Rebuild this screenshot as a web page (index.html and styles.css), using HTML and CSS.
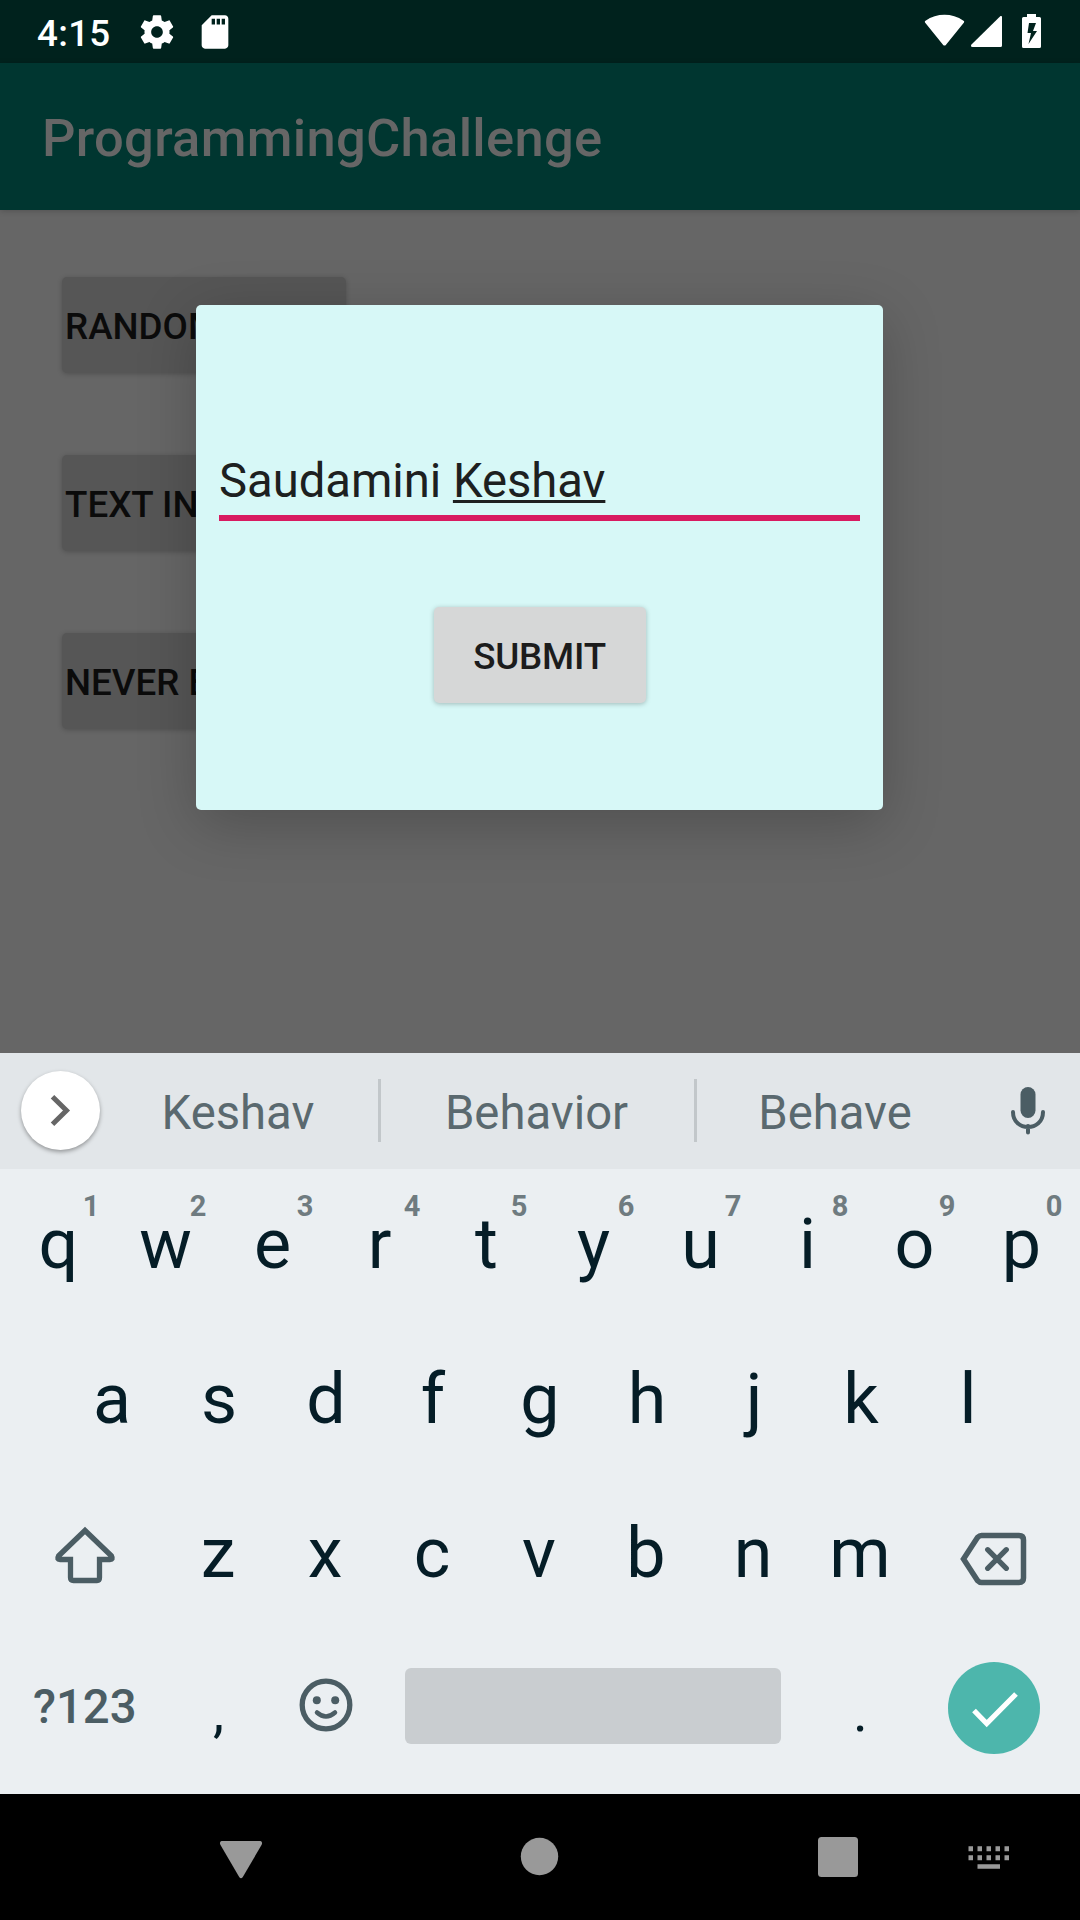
FILE: index.html
```html
<!DOCTYPE html>
<html lang="en">
<head>
<meta charset="utf-8">
<title>ProgrammingChallenge</title>
<link rel="stylesheet" href="styles.css">
</head>
<body>
<div class="phone">
  <header class="status">
    <span class="clock">4:15</span>
    <svg class="gear" width="40" height="40" viewBox="0 0 24 24"><path fill="#fff" d="M19.43 12.98c.04-.32.07-.64.07-.98s-.03-.66-.07-.98l2.11-1.65c.19-.15.24-.42.12-.64l-2-3.46c-.12-.22-.39-.3-.61-.22l-2.49 1c-.52-.4-1.08-.73-1.69-.98l-.38-2.65C14.46 2.18 14.25 2 14 2h-4c-.25 0-.46.18-.49.42l-.38 2.65c-.61.25-1.17.59-1.69.98l-2.49-1c-.23-.09-.49 0-.61.22l-2 3.46c-.13.22-.07.49.12.64l2.11 1.65c-.04.32-.07.65-.07.98s.03.66.07.98l-2.11 1.65c-.19.15-.24.42-.12.64l2 3.46c.12.22.39.3.61.22l2.49-1c.52.4 1.08.73 1.69.98l.38 2.65c.03.24.24.42.49.42h4c.25 0 .46-.18.49-.42l.38-2.65c.61-.25 1.17-.59 1.69-.98l2.49 1c.23.09.49 0 .61-.22l2-3.46c.12-.22.07-.49-.12-.64l-2.110-1.650zM12 15.500c-1.930 0-3.500-1.570-3.500-3.500s1.570-3.500 3.500-3.500 3.500 1.570 3.500 3.500-1.570 3.500-3.500 3.500z"/></svg>
    <svg class="sd" width="40" height="40" viewBox="0 0 24 24"><path fill="#fff" d="M18 2h-8L4.020 8 4 20c0 1.100.9 2 2 2h12c1.100 0 2-.9 2-2V4c0-1.100-.9-2-2-2zm-6 5.500h-2V4h2v3.500zm3 0h-2V4h2v3.500zm3 0h-2V4h2v3.500z"/></svg>
    <span class="grow"></span>
    <svg class="signals" width="120" height="36" viewBox="0 0 120 36"><g fill="#fff"><path d="M1.200 8.800Q.3 7.500 1.500 6.700C13-1.200 28-1.200 39.500 6.700Q40.700 7.500 39.800 8.800L22 30.700Q20.500 32.500 19 30.700z"/><path d="M76.500 2Q78 1.500 78 3V31.500Q78 33 76.500 33H48.500Q46 32.500 47.500 30.500z"/><path fill-rule="evenodd" d="M103 0H112V3H115.500Q117 3 117 4.500V32.500Q117 34 115.500 34H99.500Q98 34 98 32.500V4.500Q98 3 99.500 3H103zM105 9L103.500 19H107L104.500 30L113 17H109L112 9z"/></g></svg>
  </header>
  <div class="appbar">ProgrammingChallenge</div>
  <main class="content">
    <div class="choice">RANDOM</div>
    <div class="choice">TEXT IN</div>
    <div class="choice">NEVER E</div>
    <section class="dialog">
      <div class="field">Saudamini <span class="composing">Keshav</span></div>
      <div class="submit">SUBMIT</div>
    </section>
  </main>
  <section class="keyboard">
    <div class="suggestions">
      <div class="expand"><svg width="79" height="79" viewBox="0 0 79 79"><path d="M31.500 25.700L45.500 39.500 31.500 53.300" fill="none" stroke="#666" stroke-width="5"/></svg></div>
      <div class="word side">Keshav</div>
      <div class="divider"></div>
      <div class="word">Behavior</div>
      <div class="divider"></div>
      <div class="word side">Behave</div>
      <svg class="mic" width="36" height="49" viewBox="0 0 36 49"><rect x="10.500" y="1" width="15" height="31" rx="7.500" fill="#4b5d64"/><path d="M3 26C3 46 33 46 33 26M18 40V46.500" fill="none" stroke="#4b5d64" stroke-width="4" stroke-linecap="round"/></svg>
    </div>
    <div class="row upper">
      <div class="key">q<span class="hint">1</span></div><div class="key">w<span class="hint">2</span></div><div class="key">e<span class="hint">3</span></div><div class="key">r<span class="hint">4</span></div><div class="key">t<span class="hint">5</span></div><div class="key">y<span class="hint">6</span></div><div class="key">u<span class="hint">7</span></div><div class="key">i<span class="hint">8</span></div><div class="key">o<span class="hint">9</span></div><div class="key">p<span class="hint">0</span></div>
    </div>
    <div class="row upper">
      <div class="key">a</div><div class="key">s</div><div class="key">d</div><div class="key">f</div><div class="key">g</div><div class="key">h</div><div class="key">j</div><div class="key">k</div><div class="key">l</div>
    </div>
    <div class="row">
      <div class="wide"><svg width="64" height="60" viewBox="0 0 64 60"><path d="M32 5.500L58.500 31Q60.500 34.500 57 34.500H46.500V52.500Q46.500 55.500 44 55.500H20.500Q17.500 55.500 17.500 52.500V34.500H7Q3.500 34.500 5.500 31z" fill="none" stroke="#4b5d64" stroke-width="5.300"/></svg></div>
      <div class="key">z</div><div class="key">x</div><div class="key">c</div><div class="key">v</div><div class="key">b</div><div class="key">n</div><div class="key">m</div>
      <div class="wide"><svg class="back" width="68" height="56" viewBox="0 0 68 56"><path d="M4.500 28L18.500 6.500Q20.500 4.500 22.500 4.500H60Q64.500 4.500 64.500 9V47Q64.500 51.500 60 51.500H22.500Q20.500 51.500 18.500 49.500z" fill="none" stroke="#4b5d64" stroke-width="5.500"/><path d="M28.700 18.700L47.300 37.300M47.300 18.700L28.700 37.300" stroke="#4b5d64" stroke-width="5.300" stroke-linecap="round"/></svg></div>
    </div>
    <div class="row">
      <div class="wide symbols">?123</div>
      <div class="key punct">,</div>
      <div class="key"><svg class="emoji" width="54" height="54" viewBox="0 0 54 54"><g fill="none" stroke="#4b5d64"><circle cx="27" cy="27" r="23.800" stroke-width="5.300"/><path d="M18 34.500Q27 42.500 36 34.500" stroke-width="4.500" stroke-linecap="round"/></g><g fill="#4b5d64"><circle cx="17.800" cy="22.200" r="4"/><circle cx="36.200" cy="22.200" r="4"/></g></svg></div>
      <div class="space"></div>
      <div class="key punct">.</div>
      <div class="wide"><svg class="enter" width="92" height="92" viewBox="0 0 92 92"><circle cx="46" cy="46" r="46" fill="#4db6ac"/><path d="M26 48.500L38.700 61.500 68 32" fill="none" stroke="#fff" stroke-width="5.200"/></svg></div>
    </div>
  </section>
  <nav class="nav">
    <svg width="1080" height="126" viewBox="0 0 1080 126"><g fill="#999"><path d="M221.500 47H260.500Q263 48 261.500 51L242.800 83Q241 85.500 239.200 83L220.500 51Q219 48 221.500 47z"/><circle cx="539.500" cy="62.500" r="18.700"/><rect x="818" y="43" width="40" height="40" rx="3.500"/><path d="M968.500 52.200h4.500v5h-4.500zm9 0h4.500v5h-4.500zm9 0h4.500v5h-4.500zm9 0h4.500v5h-4.500zm9 0h4.500v5h-4.500zM968.500 61.200h4.500v5h-4.500zm9 0h4.500v5h-4.500zm9 0h4.500v5h-4.500zm9 0h4.500v5h-4.500zm9 0h4.500v5h-4.500zM977.500 70.200h22.500v4.600h-22.500z"/></g></svg>
  </nav>
</div>
</body>
</html>
```
FILE: styles.css
```css
body { margin: 0; font-family: Roboto, sans-serif; }
svg { display: block; flex: none; }
.phone { width: 1080px; height: 1920px; display: flex; flex-direction: column; overflow: hidden; background: #666; }
.status { height: 63px; flex: none; box-sizing: border-box; padding-left: 37px; display: flex; background: #00221d; color: #fff; }
.clock { width: 100px; font-size: 36.75px; font-weight: 500; line-height: 67px; letter-spacing: .3px; }
.gear { margin-top: 12px; }
.sd { margin: 12px 0 0 18px; }
.grow { flex: 1; }
.signals { margin: 14px 36px 0 0; }
.appbar { height: 147px; flex: none; padding-left: 42px; background: #003630; color: #666; font-size: 52.5px; font-weight: 500; line-height: 151px; letter-spacing: .3px; z-index: 1; box-shadow: 0 1px 6px rgba(0, 0, 0, .2); }
.content { height: 843px; flex: none; box-sizing: border-box; padding: 67px 62px; display: flex; flex-direction: column; gap: 82px; position: relative; overflow: hidden; background: #666; }
.choice { width: 281px; height: 96px; padding-left: 3px; background: #565656; border-radius: 5px; box-shadow: 0 1px 5px rgba(0, 0, 0, .22); color: #0b0b0b; font-size: 36.75px; font-weight: 500; line-height: 99px; white-space: nowrap; }
.dialog { position: absolute; left: 196px; top: 95px; width: 687px; height: 505px; box-sizing: border-box; padding: 140px 23px 0; border-radius: 5px; background: #d7f8f7; box-shadow: 0 14px 58px rgba(0, 0, 0, .22); display: flex; flex-direction: column; align-items: center; }
.field { width: 641px; height: 70px; border-bottom: 6px solid #d81b60; color: #1d2020; font-size: 47.25px; line-height: 73px; letter-spacing: -.05px; }
.composing { text-decoration: underline; text-decoration-thickness: 2.5px; text-underline-offset: 3px; text-decoration-skip-ink: none; }
.submit { width: 212px; height: 96px; margin-top: 86px; border-radius: 5px; background: #d6d7d7; box-shadow: 0 1px 5px rgba(0, 0, 0, .25); color: #1c1c1c; font-size: 36.75px; font-weight: 500; line-height: 99px; letter-spacing: -.2px; text-align: center; }
.keyboard { height: 741px; flex: none; background: #ebeff2; }
.suggestions { height: 116px; box-sizing: border-box; padding-left: 21px; display: flex; background: #e2e6e9; }
.expand { width: 79px; height: 79px; margin-top: 18px; border-radius: 50%; background: #fff; box-shadow: 0 2px 4px rgba(0, 0, 0, .35); }
.word { width: 313px; color: #5a696f; font-size: 47.25px; line-height: 121px; text-align: center; text-indent: -2px; }
.side { width: 278px; }
.divider { width: 3px; height: 63px; margin-top: 26px; background: #c2c7ca; }
.mic { margin: 33px 0 0 35px; }
.row { height: 154.5px; padding: 0 6px 0 4px; display: flex; justify-content: center; }
.upper { padding: 0 5px; }
.key { width: 107px; position: relative; color: #051d27; font-size: 70px; line-height: 150px; text-align: center; }
.hint { position: absolute; right: 12px; top: 20px; width: 18px; color: #6f7b80; font-size: 29px; font-weight: 700; line-height: 34px; }
.wide { width: 160.5px; display: flex; justify-content: center; align-items: flex-start; }
.wide svg { margin: 47px 0 0 1px; }
.wide .back { margin: 52.5px 0 0 -1px; }
.symbols { text-indent: 1px; color: #4b5d64; font-size: 47.25px; font-weight: 500; line-height: 149px; }
.punct { font-size: 56px; line-height: 158px; text-indent: 1px; }
.emoji { margin: 45.5px auto 0 27.3px; }
.space { width: 376px; height: 76px; margin: 35px 26px 0; border-radius: 6px; background: #c9cdd0; }
.wide .enter { margin: 29px 0 0; }
.nav { height: 126px; flex: none; background: #000; }
```
